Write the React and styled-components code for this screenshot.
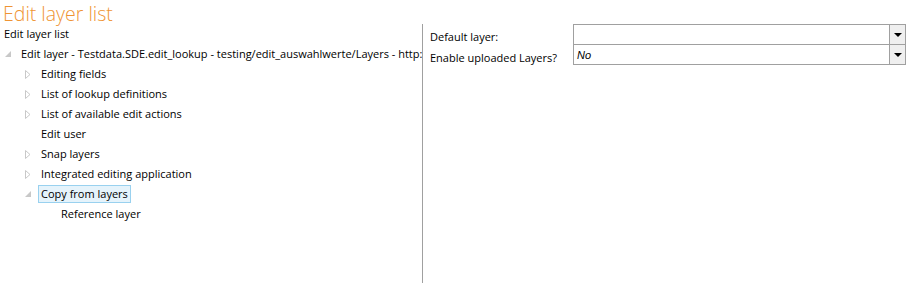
import React from "react";
import styled, { createGlobalStyle } from "styled-components";

const GlobalStyle = createGlobalStyle`
  html, body {
    margin: 0;
    padding: 0;
    background: #ffffff;
  }
  body {
    font-family: "Open Sans", "Noto Sans", sans-serif;
    font-size: 11px;
    color: #000;
  }
`;

const tree = {
  label: "Edit layer - Testdata.SDE.edit_lookup - testing/edit_auswahlwerte/Layers - http:",
  open: true,
  children: [
    { label: "Editing fields", collapsed: true },
    { label: "List of lookup definitions", collapsed: true },
    { label: "List of available edit actions", collapsed: true },
    { label: "Edit user" },
    { label: "Snap layers", collapsed: true },
    { label: "Integrated editing application", collapsed: true },
    {
      label: "Copy from layers",
      open: true,
      selected: true,
      children: [{ label: "Reference layer" }],
    },
  ],
};

function Node({ node, depth }) {
  return (
    <>
      <Row $depth={depth}>
        <Expander>
          {node.open && (
            <svg width="7" height="7" viewBox="0 0 7 7">
              <path d="M6 0 L6 6 L0 6 Z" fill="#c8c8c8" />
            </svg>
          )}
          {node.collapsed && (
            <svg width="6" height="9" viewBox="0 0 6 9">
              <path d="M0.5 0.5 L5 4.5 L0.5 8.5 Z" fill="none" stroke="#c8c8c8" />
            </svg>
          )}
        </Expander>
        <Label $selected={node.selected}>{node.label}</Label>
      </Row>
      {node.children &&
        node.children.map((c) => <Node key={c.label} node={c} depth={depth + 1} />)}
    </>
  );
}

export default function App() {
  return (
    <Page>
      <GlobalStyle />
      <Title>Edit layer list</Title>
      <Body>
        <Left>
          <SubTitle>Edit layer list</SubTitle>
          <Tree>
            <Node node={tree} depth={0} />
          </Tree>
        </Left>
        <Right>
          <Form>
            <FieldLabel>Default layer:</FieldLabel>
            <Combo>
              <ComboValue></ComboValue>
              <ComboButton>
                <Arrow />
              </ComboButton>
            </Combo>
            <FieldLabel>Enable uploaded Layers?</FieldLabel>
            <Combo $joined>
              <ComboValue>No</ComboValue>
              <ComboButton>
                <Arrow />
              </ComboButton>
            </Combo>
          </Form>
        </Right>
      </Body>
    </Page>
  );
}

const Page = styled.div`
  width: 913px;
  height: 283px;
  overflow: hidden;
  display: flex;
  flex-direction: column;
`;

const Title = styled.h1`
  margin: 0 0 -3px 0;
  padding: 0 0 0 3px;
  line-height: 27px;
  font-size: 19.5px;
  font-weight: 300;
  color: #ef9433;
  white-space: nowrap;
`;

const Body = styled.div`
  flex: 1;
  display: grid;
  grid-template-columns: 422px 1px 1fr;
  grid-template-areas: "left divider right";
  &::before {
    content: "";
    grid-area: divider;
    background: #a0a0a0;
  }
`;

const Left = styled.div`
  grid-area: left;
  padding: 2px 0 0 4px;
  overflow: hidden;
`;

const SubTitle = styled.div`
  height: 18px;
  line-height: 16px;
  white-space: nowrap;
`;

const Tree = styled.div`
  display: flex;
  flex-direction: column;
`;

const Row = styled.div`
  display: flex;
  align-items: center;
  height: 20px;
  padding-left: ${(p) => p.$depth * 20}px;
  white-space: nowrap;
`;

const Expander = styled.span`
  width: 13px;
  padding-left: 1px;
  height: 20px;
  flex: none;
  display: flex;
  align-items: center;
  justify-content: flex-start;
`;

const Label = styled.span`
  padding: 0 2px;
  line-height: 16px;
  border: 1px solid ${(p) => (p.$selected ? "#99d1ef" : "transparent")};
  background: ${(p) => (p.$selected ? "#e5f3fb" : "transparent")};
`;

const Right = styled.div`
  grid-area: right;
  padding: 0 7px;
`;

const Form = styled.div`
  display: grid;
  grid-template-columns: 143px 1fr;
`;

const FieldLabel = styled.div`
  display: flex;
  align-items: center;
  height: 21px;
  padding-top: 3px;
  box-sizing: border-box;
  white-space: nowrap;
`;

const Combo = styled.div`
  display: flex;
  box-sizing: border-box;
  border: 1px solid #a0a0a0;
  border-top-width: ${(p) => (p.$joined ? 0 : 1)}px;
  height: ${(p) => (p.$joined ? 20 : 21)}px;
`;

const ComboValue = styled.div`
  flex: 1;
  padding-left: 3px;
  display: flex;
  align-items: center;
  font-family: "Liberation Sans", sans-serif;
  font-size: 11px;
  font-style: italic;
`;

const ComboButton = styled.div`
  width: 15px;
  flex: none;
  border-left: 1px solid #a0a0a0;
  background: #efefef;
  display: flex;
  align-items: center;
  justify-content: center;
`;

const Arrow = styled.span`
  width: 0;
  height: 0;
  border-left: 4px solid transparent;
  border-right: 4px solid transparent;
  border-top: 4px solid #000;
`;
